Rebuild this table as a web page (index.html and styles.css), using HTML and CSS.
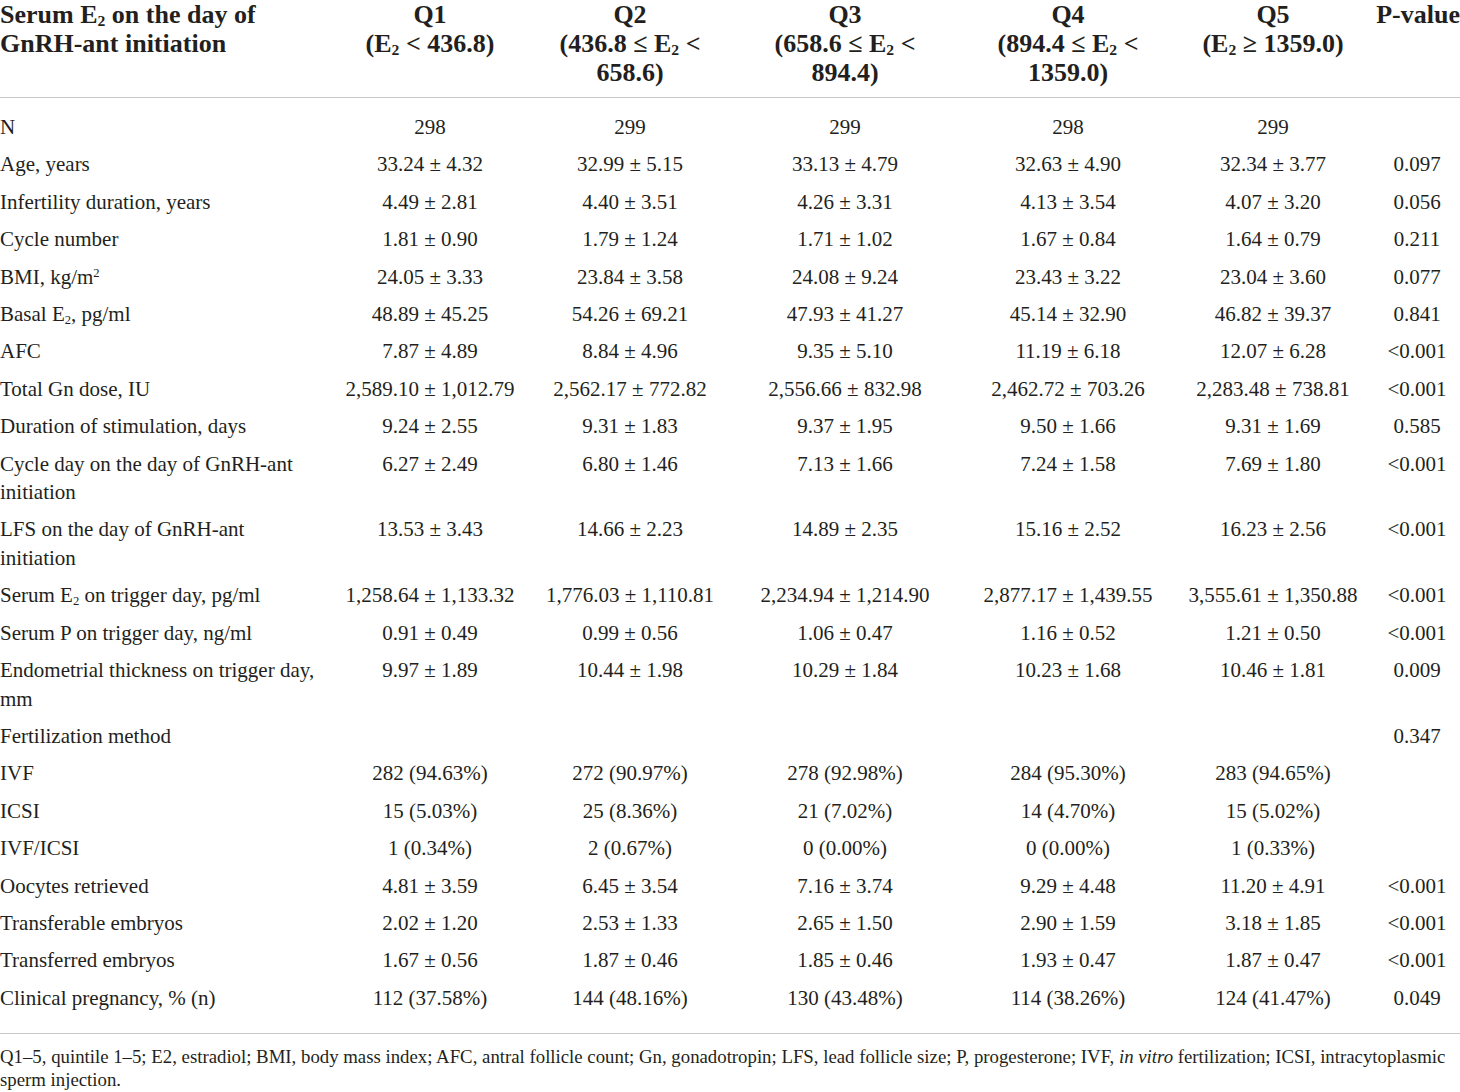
FILE: index.html
```html
<!DOCTYPE html>
<html>
<head>
<meta charset="utf-8">
<link rel="stylesheet" href="styles.css">
</head>
<body>
<div class="wrap">
<table class="tbl">
<colgroup>
<col class="c-label"><col class="c-q1"><col class="c-q2"><col class="c-q3"><col class="c-q4"><col class="c-q5"><col class="c-p">
</colgroup>
<thead>
<tr>
<th class="lbl">Serum E<sub>2</sub> on the day of<br>GnRH-ant initiation</th>
<th>Q1<br>(E<sub>2</sub> &lt; 436.8)</th>
<th>Q2<br>(436.8 ≤ E<sub>2</sub> &lt;<br>658.6)</th>
<th>Q3<br>(658.6 ≤ E<sub>2</sub> &lt;<br>894.4)</th>
<th>Q4<br>(894.4 ≤ E<sub>2</sub> &lt;<br>1359.0)</th>
<th>Q5<br>(E<sub>2</sub> ≥ 1359.0)</th>
<th class="pv">P-value</th>
</tr>
</thead>
<tbody>
<tr class="first"><td class="lbl">N</td><td>298</td><td>299</td><td>299</td><td>298</td><td>299</td><td class="pc"></td></tr>
<tr><td class="lbl">Age, years</td><td>33.24 ± 4.32</td><td>32.99 ± 5.15</td><td>33.13 ± 4.79</td><td>32.63 ± 4.90</td><td>32.34 ± 3.77</td><td class="pc">0.097</td></tr>
<tr><td class="lbl">Infertility duration, years</td><td>4.49 ± 2.81</td><td>4.40 ± 3.51</td><td>4.26 ± 3.31</td><td>4.13 ± 3.54</td><td>4.07 ± 3.20</td><td class="pc">0.056</td></tr>
<tr><td class="lbl">Cycle number</td><td>1.81 ± 0.90</td><td>1.79 ± 1.24</td><td>1.71 ± 1.02</td><td>1.67 ± 0.84</td><td>1.64 ± 0.79</td><td class="pc">0.211</td></tr>
<tr><td class="lbl">BMI, kg/m<sup>2</sup></td><td>24.05 ± 3.33</td><td>23.84 ± 3.58</td><td>24.08 ± 9.24</td><td>23.43 ± 3.22</td><td>23.04 ± 3.60</td><td class="pc">0.077</td></tr>
<tr><td class="lbl">Basal E<sub>2</sub>, pg/ml</td><td>48.89 ± 45.25</td><td>54.26 ± 69.21</td><td>47.93 ± 41.27</td><td>45.14 ± 32.90</td><td>46.82 ± 39.37</td><td class="pc">0.841</td></tr>
<tr><td class="lbl">AFC</td><td>7.87 ± 4.89</td><td>8.84 ± 4.96</td><td>9.35 ± 5.10</td><td>11.19 ± 6.18</td><td>12.07 ± 6.28</td><td class="pc">&lt;0.001</td></tr>
<tr><td class="lbl">Total Gn dose, IU</td><td>2,589.10 ± 1,012.79</td><td>2,562.17 ± 772.82</td><td>2,556.66 ± 832.98</td><td>2,462.72 ± 703.26</td><td>2,283.48 ± 738.81</td><td class="pc">&lt;0.001</td></tr>
<tr><td class="lbl">Duration of stimulation, days</td><td>9.24 ± 2.55</td><td>9.31 ± 1.83</td><td>9.37 ± 1.95</td><td>9.50 ± 1.66</td><td>9.31 ± 1.69</td><td class="pc">0.585</td></tr>
<tr><td class="lbl">Cycle day on the day of GnRH-ant<br>initiation</td><td>6.27 ± 2.49</td><td>6.80 ± 1.46</td><td>7.13 ± 1.66</td><td>7.24 ± 1.58</td><td>7.69 ± 1.80</td><td class="pc">&lt;0.001</td></tr>
<tr><td class="lbl">LFS on the day of GnRH-ant<br>initiation</td><td>13.53 ± 3.43</td><td>14.66 ± 2.23</td><td>14.89 ± 2.35</td><td>15.16 ± 2.52</td><td>16.23 ± 2.56</td><td class="pc">&lt;0.001</td></tr>
<tr><td class="lbl">Serum E<sub>2</sub> on trigger day, pg/ml</td><td>1,258.64 ± 1,133.32</td><td>1,776.03 ± 1,110.81</td><td>2,234.94 ± 1,214.90</td><td>2,877.17 ± 1,439.55</td><td>3,555.61 ± 1,350.88</td><td class="pc">&lt;0.001</td></tr>
<tr><td class="lbl">Serum P on trigger day, ng/ml</td><td>0.91 ± 0.49</td><td>0.99 ± 0.56</td><td>1.06 ± 0.47</td><td>1.16 ± 0.52</td><td>1.21 ± 0.50</td><td class="pc">&lt;0.001</td></tr>
<tr><td class="lbl">Endometrial thickness on trigger day,<br>mm</td><td>9.97 ± 1.89</td><td>10.44 ± 1.98</td><td>10.29 ± 1.84</td><td>10.23 ± 1.68</td><td>10.46 ± 1.81</td><td class="pc">0.009</td></tr>
<tr><td class="lbl">Fertilization method</td><td></td><td></td><td></td><td></td><td></td><td class="pc">0.347</td></tr>
<tr><td class="lbl">IVF</td><td>282 (94.63%)</td><td>272 (90.97%)</td><td>278 (92.98%)</td><td>284 (95.30%)</td><td>283 (94.65%)</td><td class="pc"></td></tr>
<tr><td class="lbl">ICSI</td><td>15 (5.03%)</td><td>25 (8.36%)</td><td>21 (7.02%)</td><td>14 (4.70%)</td><td>15 (5.02%)</td><td class="pc"></td></tr>
<tr><td class="lbl">IVF/ICSI</td><td>1 (0.34%)</td><td>2 (0.67%)</td><td>0 (0.00%)</td><td>0 (0.00%)</td><td>1 (0.33%)</td><td class="pc"></td></tr>
<tr><td class="lbl">Oocytes retrieved</td><td>4.81 ± 3.59</td><td>6.45 ± 3.54</td><td>7.16 ± 3.74</td><td>9.29 ± 4.48</td><td>11.20 ± 4.91</td><td class="pc">&lt;0.001</td></tr>
<tr><td class="lbl">Transferable embryos</td><td>2.02 ± 1.20</td><td>2.53 ± 1.33</td><td>2.65 ± 1.50</td><td>2.90 ± 1.59</td><td>3.18 ± 1.85</td><td class="pc">&lt;0.001</td></tr>
<tr><td class="lbl">Transferred embryos</td><td>1.67 ± 0.56</td><td>1.87 ± 0.46</td><td>1.85 ± 0.46</td><td>1.93 ± 0.47</td><td>1.87 ± 0.47</td><td class="pc">&lt;0.001</td></tr>
<tr class="last"><td class="lbl">Clinical pregnancy, % (n)</td><td>112 (37.58%)</td><td>144 (48.16%)</td><td>130 (43.48%)</td><td>114 (38.26%)</td><td>124 (41.47%)</td><td class="pc">0.049</td></tr>
</tbody>
</table>
<p class="note">Q1–5, quintile 1–5; E2, estradiol; BMI, body mass index; AFC, antral follicle count; Gn, gonadotropin; LFS, lead follicle size; P, progesterone; IVF, <i>in vitro</i> fertilization; ICSI, intracytoplasmic<br>sperm injection.</p>
</div>
</body>
</html>
```
FILE: styles.css
```css
html, body {
  margin: 0;
  padding: 0;
  background: #ffffff;
}
body {
  font-family: "Liberation Serif", "Times New Roman", serif;
  color: #231f20;
}
.wrap {
  width: 1460px;
}
.tbl {
  width: 1460px;
  border-collapse: collapse;
  table-layout: fixed;
}
.c-label { width: 340px; }
.c-q1 { width: 180px; }
.c-q2 { width: 220px; }
.c-q3 { width: 210px; }
.c-q4 { width: 236px; }
.c-q5 { width: 174px; }
.c-p { width: 100px; }

.tbl th {
  font-size: 26px;
  font-weight: bold;
  line-height: 29px;
  text-align: center;
  vertical-align: top;
  padding: 0 0 10px 0;
  border-bottom: 1px solid #c8c8c8;
  white-space: nowrap;
}
.tbl th.lbl {
  text-align: left;
}
.tbl th.pv {
  text-align: right;
}
.tbl sub {
  font-size: 0.6em;
  line-height: 0;
  vertical-align: -0.22em;
}
.tbl sup {
  font-size: 0.6em;
  line-height: 0;
  vertical-align: 0.55em;
}
.tbl td {
  font-size: 21px;
  line-height: 28.5px;
  text-align: center;
  vertical-align: top;
  padding: 4.5px 0 4.4px 0;
  white-space: nowrap;
}
.tbl td.lbl {
  text-align: left;
}
.tbl td.pc {
  padding-left: 14px;
}
.tbl tr.first td {
  padding-top: 15px;
}
.tbl tr.last td {
  padding-bottom: 21px;
  border-bottom: 1px solid #c8c8c8;
}
.note {
  margin: 11px 0 0 0;
  font-size: 18.8px;
  line-height: 23px;
  white-space: nowrap;
}
```
